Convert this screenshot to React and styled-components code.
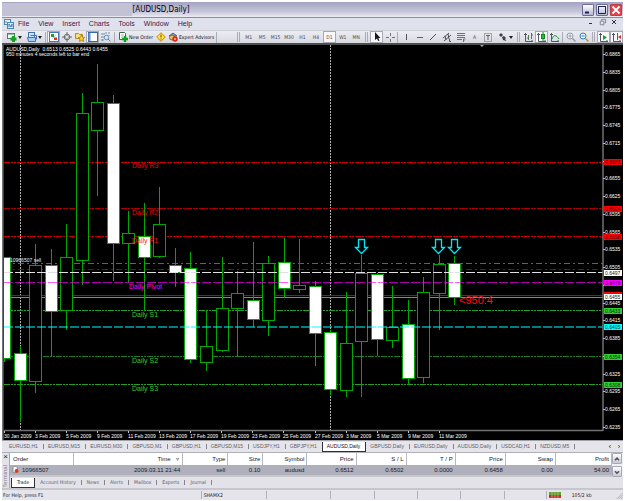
import React from 'react'
import styled, { createGlobalStyle, css } from 'styled-components'

const GlobalStyle = createGlobalStyle`
  body {
    margin: 0;
    background: #ffffff;
    font-family: 'Liberation Sans', Arial, sans-serif;
    color: #20202c;
  }
  button {
    font-family: inherit;
    color: inherit;
    cursor: pointer;
  }
`

const uiFont = css`
  font-family: 'DejaVu Sans Condensed', 'Liberation Sans', sans-serif;
`

const Window = styled.div`
  margin: 2px;
  background: #e2e2ea;
`

const TitleBar = styled.header`
  display: flex;
  align-items: center;
  height: 15px;
  background: linear-gradient(#a3a3c3, #b4b4cd 30%, #c6c6d9 65%, #ececf4);
  border-bottom: 1px solid #8c8c9c;
`

const TitleBlank = styled.div`
  width: 21%;
  height: 13px;
  background: #c2c2d4;
`

const Title = styled.h1`
  flex: 1;
  margin: 0;
  ${uiFont}
  font-size: 8px;
  font-weight: normal;
  line-height: 14px;
  color: #000008;
`

const WindowButtons = styled.div`
  display: flex;
  gap: 2px;
  padding-right: 1px;
`

const WindowButton = styled.button`
  display: block;
  width: 12px;
  height: 12px;
  padding: 0;
  border: 1px solid ${({ $close }) => ($close ? '#b84048' : '#6c6c98')};
  border-radius: 1px;
  background: ${({ $close }) => ($close ? '#e0434a' : 'linear-gradient(#ffffff, #b6b6d2)')};
  svg {
    display: block;
  }
`

const MenuBar = styled.nav`
  display: flex;
  align-items: center;
  gap: 4px;
  height: 12px;
  padding: 0 4px 0 2px;
  background: #dfe1ec;
  border-bottom: 1px solid #d0d0da;
`

const Menus = styled.div`
  display: flex;
  gap: 9px;
`

const MenuItem = styled.button`
  padding: 0;
  border: 0;
  background: none;
  font-size: 7px;
  line-height: 12px;
  color: #402048;
`

const ChildButtons = styled.div`
  display: flex;
  gap: 2px;
  margin-left: auto;
`

const ToolBar = styled.div`
  display: flex;
  align-items: center;
  height: 12px;
  padding-left: 2px;
  background: linear-gradient(#ececf2, #d9d9e2);
  border-bottom: 2px solid #4c504c;
`

const ToolGroup = styled.div`
  display: flex;
  align-items: center;
  ${({ $width }) => $width && `width: ${$width}px;`}
`

const ToolButton = styled.button`
  display: flex;
  flex: ${({ $grow }) => ($grow ? '1 1 0' : 'none')};
  align-items: center;
  justify-content: center;
  gap: 1px;
  box-sizing: border-box;
  min-width: ${({ $wide }) => ($wide ? 20 : 13)}px;
  height: 12px;
  padding: 0;
  border: 1px solid ${({ $pressed }) => ($pressed ? '#a8a8b4' : 'transparent')};
  background: ${({ $pressed }) => ($pressed ? '#f8f8fc' : 'none')};
  ${uiFont}
  font-size: 5px;
  line-height: 10px;
  color: ${({ $grow }) => ($grow ? '#484850' : '#101018')};
  white-space: nowrap;
  svg {
    display: block;
    flex: none;
  }
`

const Separator = styled.span`
  width: 1px;
  height: 11px;
  margin: 0 ${({ $gap }) => $gap || 1}px;
  background: #acacb6;
`

const Grip = styled.span`
  width: 1px;
  height: 10px;
  margin: 0 2px;
  border: solid #acacb6;
  border-width: 0 1px;
`

const Spacer = styled.span`
  flex: 1;
`

const ChartArea = styled.main`
  background: #000000;
  svg {
    display: block;
    width: 100%;
    height: auto;
  }
  text {
    font-size: 5px;
  }
  .level {
    font-size: 7px;
  }
  .countdown {
    font-size: 11px;
  }
`

const ChartTabs = styled.div`
  display: flex;
  align-items: center;
  height: 11px;
  padding-left: 3px;
  background: #e4e4ea;
  border-top: 1px solid #a0a0a8;
`

const ChartTab = styled.button`
  height: 10px;
  box-sizing: border-box;
  padding: 0 5px 0 4px;
  border: ${({ $active }) => ($active ? '1px solid #303038' : '0')};
  border-top: 0;
  background: ${({ $active }) => ($active ? '#ffffff' : 'none')};
  font-size: 5px;
  line-height: 9px;
  color: ${({ $active }) => ($active ? '#101018' : '#606068')};
  white-space: nowrap;
`

const TerminalTab = styled(ChartTab)`
  ${uiFont}
  padding: 0 5px;
`

const Divider = styled.span`
  width: 1px;
  height: 5px;
  background: #84848c;
`

const TabArrows = styled.div`
  display: flex;
  gap: 1px;
  margin-left: auto;
  button {
    width: 8px;
    padding: 0;
    border: 0;
    background: none;
    font-size: 7px;
    line-height: 8px;
  }
`

const Terminal = styled.section`
  display: flex;
  border-top: 1px solid #b0b0b8;
  background: #e2e2e8;
`

const TerminalSide = styled.div`
  display: flex;
  flex-direction: column;
  align-items: center;
  justify-content: space-between;
  width: 7px;
  border-right: 1px solid #a8a8b0;
`

const CloseButton = styled.button`
  padding: 0;
  border: 0;
  background: none;
  font-size: 8px;
  line-height: 7px;
`

const SideLabel = styled.span`
  writing-mode: vertical-rl;
  rotate: 180deg;
  font-size: 6px;
  line-height: 7px;
  color: #80808a;
`

const TerminalBody = styled.div`
  flex: 1;
  min-width: 0;
`

const TableWrap = styled.div`
  display: flex;
`

const Table = styled.table`
  flex: 1;
  width: 100%;
  table-layout: fixed;
  border-collapse: collapse;
  font-size: 6px;
  line-height: 9px;
  border-bottom: 2px solid #c8c8cc;
`

const HeadCell = styled.th`
  height: 12px;
  padding: 0 3px;
  background: #ffffff;
  font-weight: normal;
  text-align: ${({ $left }) => ($left ? 'left' : 'right')};
  box-shadow: inset -1px 0 #b8b8c0;
`

const Cell = styled.td`
  height: 10px;
  padding: 0 3px 0 2px;
  background: #b0b0bc;
  text-align: ${({ $left }) => ($left ? 'left' : 'right')};
  svg {
    vertical-align: middle;
    margin-right: 3px;
  }
`

const ScrollBar = styled.div`
  display: flex;
  flex-direction: column;
  justify-content: space-between;
  width: 11px;
  background: #f0f0f4;
`

const ScrollButton = styled.button`
  width: 10px;
  height: 11px;
  padding: 0;
  border: 1px solid #a8a8b4;
  border-radius: 1px;
  background: linear-gradient(#ffffff, #c8c8d4);
  svg {
    display: block;
  }
`

const TerminalTabs = styled.div`
  display: flex;
  align-items: center;
  height: 11px;
  padding-left: 1px;
`

const StatusBar = styled.footer`
  display: grid;
  grid-template-columns: 198fr 65fr 64fr 44fr 43fr 43fr 43fr 42fr 77fr;
  align-items: center;
  height: 10px;
  border-top: 2px solid #c6c6ce;
  background: #e4e4ea;
  ${uiFont}
  font-size: 5px;
  line-height: 8px;
`

const StatusCell = styled.div`
  display: flex;
  align-items: center;
  gap: 11px;
  box-sizing: border-box;
  min-width: 0;
  height: 8px;
  padding-left: ${({ $first }) => ($first ? 1 : 2)}px;
  border-left: ${({ $first }) => ($first ? '0' : '1px solid #b0b0b8')};
  white-space: nowrap;
  svg:last-child {
    margin-left: auto;
  }
`

/* ---------- icons ---------- */

const Icon = ({ children, size = 10, stroke = '#505060' }) => (
  <svg width={size} height={size} viewBox="0 0 10 10" fill="none" stroke={stroke} strokeWidth="1" aria-hidden="true">
    {children}
  </svg>
)

const Caret = () => (
  <svg width="4" height="3" viewBox="0 0 4 3" aria-hidden="true"><path d="M0 0h4L2 3z" fill="#202028" /></svg>
)

const AppIcon = () => (
  <Icon stroke="#4a86b8">
    <rect x=".5" y=".5" width="6" height="5" fill="#e8f4fc" />
    <rect x="3.5" y="3.5" width="6" height="6" fill="#d4eafa" />
    <path d="M5 8V5l2 3 1-3v3M1 3h2" />
  </Icon>
)

const NewChartIcon = () => (
  <Icon>
    <rect x=".5" y="1.5" width="7" height="5" fill="#fff" stroke="#38885c" />
    <path d="M1 2h6" stroke="#38885c" />
    <path d="M6.500 4v6M3.500 7h6" stroke="#18a020" strokeWidth="3" />
  </Icon>
)

const ProfilesIcon = () => (
  <Icon stroke="#3e74b0">
    <rect x="1.500" y=".5" width="6" height="5" fill="#d0e4f8" />
    <path d="M.5 5.500h8v4h-7z" fill="#a8ccf0" />
    <path d="M3.500 3.500h6v4" />
  </Icon>
)

const MarketIcon = () => (
  <Icon stroke="#4878b0">
    <rect x=".5" y=".5" width="9" height="9" fill="#fff" />
    <path d="M2 2h3v3H2z" fill="#20a030" stroke="none" />
    <path d="M5 5.500h3v2.500H5z" fill="#e03020" stroke="none" />
    <path d="M3 7l4-4" stroke="#b8cce4" />
  </Icon>
)

const TargetIcon = () => (
  <Icon stroke="#686870">
    <circle cx="5" cy="5" r="2.800" />
    <path d="M5 0v4M5 6v4M0 5h4M6 5h4" />
  </Icon>
)

const NavigatorIcon = () => (
  <Icon stroke="#b08820">
    <path d="M.5 1.500h3l1 1h3v4h-7z" fill="#f8e080" />
    <path d="M6.500 3l1 2.200 2.200.3-1.700 1.500.5 2.500-2-1.200-2 1.200.4-2.500-1.600-1.500 2.200-.3z" fill="#ffd030" />
  </Icon>
)

const TerminalIcon = () => (
  <Icon stroke="#3868a8">
    <rect x=".5" y=".5" width="9" height="9" fill="#fff" />
    <path d="M1.500 1v8" strokeWidth="2" stroke="#6090d0" />
  </Icon>
)

const TesterIcon = () => (
  <Icon stroke="#6890b0">
    <path d="M1 1v8M3 1v5M5 0v4M8 0v4M1 8h3" strokeDasharray="2 1" />
    <circle cx="5.500" cy="5.500" r="2.200" fill="#d8ecf8" />
    <path d="M7 7l2.500 2.500" stroke="#a08030" />
  </Icon>
)

const NewOrderIcon = () => (
  <Icon stroke="#406850">
    <path d="M1.500.5h5l1 1v6h-6z" fill="#fff" />
    <path d="M3 3h3M3 5h2" stroke="#a0b0a8" />
    <path d="M7 4v6M4 7h6" stroke="#10a020" strokeWidth="2.400" />
  </Icon>
)

const MetaEditorIcon = () => (
  <Icon stroke="#c09010">
    <path d="M5 .7L9.300 5 5 9.300.7 5z" fill="#ffe040" />
    <path d="M5 2.500v3M5 6.500v1" stroke="#705000" />
  </Icon>
)

const ExpertIcon = () => (
  <Icon stroke="#906820">
    <path d="M1 4l4-3 4 3z" fill="#80a0c8" stroke="#406898" />
    <circle cx="4" cy="5.500" r="2.500" fill="#f0c060" />
    <circle cx="7" cy="7" r="2.700" fill="#e02818" stroke="none" />
    <path d="M6 7h2" stroke="#fff" />
  </Icon>
)

const CursorIcon = () => (
  <Icon><path d="M3 0v8l2-1.600L6.200 9l1.300-.6L6.300 6H8.500z" fill="#181820" stroke="none" /></Icon>
)
const CrossIcon = () => <Icon stroke="#707078"><path d="M5.500 1v3M5.500 7v3M1 5.500h3M7 5.500h3" /></Icon>
const VLineIcon = () => <Icon stroke="#505058"><path d="M5.500 2v6" /></Icon>
const HLineIcon = () => <Icon stroke="#606068"><path d="M2 5.500h6" /></Icon>
const TrendIcon = () => <Icon stroke="#505058"><path d="M2 8l6-6" /></Icon>
const ChannelIcon = () => (
  <Icon stroke="#505058"><path d="M1 6l6-5M2 9l7-6M3 4l1 4M6 2l1 5M7.500 7v2.500H9" /></Icon>
)
const FiboIcon = () => (
  <Icon stroke="#707078"><path d="M1 1.500h8M1 3.500h8M1 5.500h8M1 7.500h5M7.500 10V7h2M7.500 8.500h1" /></Icon>
)
const LabelIcon = () => (
  <Icon stroke="#606068"><rect x="1.500" y="1.500" width="7" height="8" strokeDasharray="1 1" /><path d="M3 3.500h4M5 3.500V8" /></Icon>
)
const ArrowsIcon = () => (
  <Icon stroke="none"><path d="M1 3l2-2 2 2-2 2zM4 5l2-1 2 2-1 1 1.500 2L5 8z" fill="#404048" /></Icon>
)

const axes = <path d="M1.500 1v8.500H9M0 2.500h3M8 8v2" stroke="#505860" />
const BarsIcon = () => <Icon>{axes}<path d="M4.500 3v5M7.500 1v6M3 6h2M7 3h2" stroke="#507858" /></Icon>
const CandlesIcon = () => (
  <Icon>{axes}<path d="M6 0v9" stroke="#108820" /><rect x="4.500" y="2.500" width="3" height="4" fill="#28c038" stroke="#108820" /></Icon>
)
const LineIcon = () => <Icon>{axes}<path d="M2 7c2-5 4-4 7 0" stroke="#189028" /></Icon>
const ShiftIcon = () => <Icon>{axes}<path d="M4 3l4 2.500L4 8z" fill="#18a028" stroke="none" /></Icon>
const ScrollIcon = () => (
  <Icon>{axes}<path d="M5.500 1v7" stroke="#4060a0" /><path d="M9 3v4L6 5z" fill="#d83020" stroke="none" /></Icon>
)
const ZoomIcon = ({ color, plus }) => (
  <Icon stroke={color}>
    <circle cx="4" cy="4" r="3" fill="#e8f4fc" />
    <path d={plus ? 'M2.500 4h3M4 2.500v3' : 'M2.500 4h3'} />
    <path d="M6.500 6.500l3 3" stroke={plus ? '#9898a0' : '#c09030'} strokeWidth="1.500" />
  </Icon>
)

const MinGlyph = () => <Icon stroke="#202050"><path d="M2 7.500h4" strokeWidth="2" /></Icon>
const MaxGlyph = () => <Icon stroke="#202050"><path d="M1 1.500h8M1.500 1v7.500h7V1" /></Icon>
const CloseGlyph = () => <Icon stroke="#fff"><path d="M1.500 1.500l7 7M8.500 1.500l-7 7" strokeWidth="1.800" /></Icon>
const SmallMin = () => <Icon stroke="#303038"><path d="M3 6.500h3" /></Icon>
const SmallRestore = () => <Icon size={9} stroke="#808088"><path d="M4 3V1.500h4.500v4H7M2.500 3.500h4v4h-4z" /></Icon>
const SmallClose = () => <Icon stroke="#303038"><path d="M3 3l4 4M7 3L3 7" /></Icon>

/* ---------- chart data ---------- */

// [x, wick top, body top, body bottom, wick bottom, filled]
const candles = [
  [4, 257, 257, 358, 362, 1],
  [20, 346, 353, 380, 422, 1],
  [35, 244, 265, 381, 393, 0],
  [51, 249, 265, 311, 357, 1],
  [66, 224, 257, 310, 330, 0],
  [82, 93, 113, 260, 285, 0],
  [97, 64, 102, 130, 196, 0],
  [113, 95, 103, 243, 281, 1],
  [128, 211, 233, 243, 282, 0],
  [144, 203, 236, 257, 311, 1],
  [159, 187, 224, 256, 258, 0],
  [175, 248, 265, 272, 287, 1],
  [190, 252, 268, 359, 363, 1],
  [206, 310, 346, 362, 371, 0],
  [222, 257, 308, 350, 352, 0],
  [237, 271, 293, 308, 357, 0],
  [253, 242, 300, 319, 327, 1],
  [268, 256, 263, 320, 336, 0],
  [284, 238, 262, 288, 298, 1],
  [299, 239, 285, 289, 293, 0],
  [315, 281, 286, 333, 366, 1],
  [330, 330, 332, 389, 395, 1],
  [346, 292, 343, 390, 397, 0],
  [361, 255, 273, 341, 397, 0],
  [377, 273, 274, 339, 356, 1],
  [392, 286, 327, 340, 348, 0],
  [408, 300, 324, 378, 385, 1],
  [423, 277, 292, 377, 383, 0],
  [439, 255, 264, 293, 330, 0],
  [454, 256, 263, 297, 305, 1],
]

const levels = [
  { y: 162, color: '#d00000', dash: '6 1 2 1 2 1' },
  { y: 208, color: '#b00000', dash: '6 1 2 1 2 1' },
  { y: 236, color: '#d00000', dash: '6 1 2 1 2 1' },
  { y: 263, color: '#209020', dash: '6 3 2 3' },
  { y: 269, color: '#a00000', dash: '6 3 2 3' },
  { y: 310, color: '#24a024', dash: '6 1 2 1 2 1' },
  { y: 356, color: '#1c801c', dash: '6 1 2 1 2 1' },
  { y: 384, color: '#24a024', dash: '6 1 2 1 2 1' },
  { y: 295, color: '#c00000' },
  { y: 297, color: '#808890' },
]

const captions = [
  ['Daily R3', 132, 168, '#f00000'],
  ['Daily R2', 132, 215, '#f00000'],
  ['Daily R1', 132, 243, '#ff2020'],
  ['Daily Pivot', 129, 289, '#ff00ff'],
  ['Daily S1', 132, 317, '#32cd32'],
  ['Daily S2', 132, 363, '#32cd32'],
  ['Daily S3', 132, 391, '#32cd32'],
]

const tags = [
  ['0.6683', 162, '#ff0000', '#500000'],
  ['0.6604', 209, '#ff0000', '#500000'],
  ['0.6558', 237, '#ff0000', '#500000'],
  ['0.6497', 273, '#ffffff', '#202020'],
  ['0.6479', 283, '#ff00ff', '#400040'],
  ['', 295, '#ff0000', '#500000'],
  ['0.6455', 297, '#ffffff', '#202020'],
  ['0.6433', 311, '#32cd32', '#003000'],
  ['0.6405', 327, '#00ffff', '#003038'],
  ['0.6354', 357, '#32cd32', '#003000'],
  ['0.6308', 385, '#32cd32', '#003000'],
]

// a scale price gives way to a tag that covers it
const prices = Array.from({ length: 22 }, (_, i) => ({
  price: ((6865 - i * 30) / 10000).toFixed(4),
  y: 54 + Math.round(i * 17.76),
})).map(p => ({ ...p, covered: tags.some(([, y]) => Math.abs(y - p.y) < 4) }))

const dates = [
  '30 Jan 2009', '3 Feb 2009', '5 Feb 2009', '9 Feb 2009', '11 Feb 2009',
  '13 Feb 2009', '17 Feb 2009', '19 Feb 2009', '23 Feb 2009', '25 Feb 2009',
  '27 Feb 2009', '3 Mar 2009', '5 Mar 2009', '9 Mar 2009', '11 Mar 2009',
]

const Candle = ({ x, high, top, bottom, low, filled }) => (
  <g stroke="#00a800">
    <path d={`M${x + 0.5} ${high}V${top}M${x + 0.5} ${bottom + 1}V${low}`} />
    <rect x={x - 5.5} y={top + 0.5} width="12" height={bottom - top} fill={filled ? '#fff' : '#000'} />
  </g>
)

const DownArrow = ({ x }) => (
  <path
    d={`M${x - 2.5} 239.500h6v8h3l-6 6-6-6h3z`}
    fill="#000"
    stroke="#00e8f8"
    strokeWidth="1.300"
  />
)

const Chart = () => (
  <svg viewBox="2 45 621 395" role="img" aria-label="AUDUSD daily candlestick chart">
    <defs>
      <clipPath id="plot"><rect x="4" y="45" width="599" height="386" /></clipPath>
    </defs>
    <path d="M2.500 45V440" stroke="#707478" />
    <path d="M3.500 45V440" stroke="#404448" />
    <g clipPath="url(#plot)">
      <path d="M20.500 45V431M330.500 45V431" stroke="#b0b0b0" strokeDasharray="2 1" />
      {levels.map(({ y, color, dash }) => (
        <path key={y} d={`M4 ${y + 0.5}H603`} stroke={color} strokeDasharray={dash} />
      ))}
      {candles.map(([x, high, top, bottom, low, filled]) => (
        <Candle key={x} x={x} high={high} top={top} bottom={bottom} low={low} filled={filled} />
      ))}
      <path d="M4 272.500H603" stroke="#e0e0e0" strokeDasharray="9 2" />
      <path d="M4 282.500H603" stroke="#ff00ff" strokeOpacity=".65" strokeDasharray="9 2" />
      <path d="M4 327H603" stroke="#00ffff" strokeOpacity=".5" strokeWidth="2" strokeDasharray="9 2" />
    </g>
    {captions.map(([label, x, y, color]) => (
      <text key={label} className="level" x={x} y={y} fill={color}>{label}</text>
    ))}
    {[361, 438, 454].map(x => <DownArrow key={x} x={x} />)}
    <text className="countdown" x="459" y="304" fill="#ff1010">&lt;950:4</text>
    <text x="6" y="51" fill="#fff">AUDUSD,Daily&nbsp; 0.6513 0.6525 0.6443 0.6455</text>
    <text x="6" y="56" fill="#fff">950 minutes 4 seconds left to bar end</text>
    <text x="10" y="262" fill="#f0f0f0">10966507 sell</text>
    <path d="M480 45h4l-2 2z" fill="#90a8b8" />

    <path d="M603 45V431M4 430.500H603" stroke="#707070" strokeWidth="1.500" fill="none" />
    {prices.map(({ price, y, covered }) => (
      <g key={price}>
        <path d={`M603 ${y + 0.5}h2`} stroke="#c0c0c0" />
        {!covered && <text x="605" y={y + 2} fill="#fff">{price}</text>}
      </g>
    ))}
    {tags.map(([price, y, bg, fg]) => (
      <g key={y}>
        <rect x="604" y={y - 3} width="18" height="6" fill={bg} />
        {price && <text x="605" y={y + 2} fill={fg}>{price}</text>}
      </g>
    ))}
    {dates.map((date, i) => (
      <g key={date}>
        <path d={`M${Math.round(4 + i * 31.05)}.500 431v2`} stroke="#c0c0c0" />
        <text x={Math.round(4 + i * 31.05)} y="438" fill="#fff">{date}</text>
      </g>
    ))}
  </svg>
)

/* ---------- page ---------- */

const menus = ['File', 'View', 'Insert', 'Charts', 'Tools', 'Window', 'Help']
const periods = ['M1', 'M5', 'M15', 'M30', 'H1', 'H4', 'D1', 'W1', 'MN']
const chartTabs = [
  'EURUSD,H1', 'EURUSD,M15', 'EURUSD,M30', 'GBPUSD,M1', 'GBPUSD,H1', 'GBPUSD,M15', 'USDJPY,H1', 'GBPJPY,H1',
  'AUDUSD,Daily', 'GBPUSD,Daily', 'EURUSD,Daily', 'AUDUSD,Daily', 'USDCAD,H1', 'NZDUSD,M5',
]
const activeChart = 8
const columns = [
  ['Order', 64, '10966507'],
  ['Time', 109, '2009.03.11 21:44'],
  ['Type', 45, 'sell'],
  ['Size', 35, '0.10'],
  ['Symbol', 44, 'audusd'],
  ['Price', 49, '0.6512'],
  ['S / L', 50, '0.6502'],
  ['T / P', 49, '0.0000'],
  ['Price', 50, '0.6458'],
  ['Swap', 50, '0.00'],
  ['Profit', 56, '54.00'],
]
const terminalTabs = ['Trade', 'Account History', 'News', 'Alerts', 'Mailbox', 'Experts', 'Journal']

const Tools = () => (
  <ToolBar role="toolbar" aria-label="Tools">
    <ToolButton $wide aria-label="New chart"><NewChartIcon /><Caret /></ToolButton>
    <ToolButton $wide aria-label="Profiles"><ProfilesIcon /><Caret /></ToolButton>
    <Separator />
    <ToolButton $pressed aria-label="Market watch"><MarketIcon /></ToolButton>
    <ToolButton aria-label="Data window"><TargetIcon /></ToolButton>
    <ToolButton aria-label="Navigator"><NavigatorIcon /></ToolButton>
    <ToolButton $pressed aria-label="Terminal"><TerminalIcon /></ToolButton>
    <ToolButton aria-label="Strategy tester"><TesterIcon /></ToolButton>
    <Separator $gap={2} />
    <ToolButton><NewOrderIcon />New Order</ToolButton>
    <ToolButton aria-label="MetaEditor"><MetaEditorIcon /></ToolButton>
    <ToolButton><ExpertIcon />Expert Advisors</ToolButton>
    <Separator />
    <Spacer />
    <Grip />
    <ToolGroup $width={121}>
      {periods.map(p => <ToolButton key={p} $grow $pressed={p === 'D1'}>{p}</ToolButton>)}
    </ToolGroup>
    <Grip />
    <ToolButton $pressed aria-label="Cursor"><CursorIcon /></ToolButton>
    <ToolButton aria-label="Crosshair"><CrossIcon /></ToolButton>
    <Separator />
    <ToolGroup $width={96}>
      <ToolButton $grow aria-label="Vertical line"><VLineIcon /></ToolButton>
      <ToolButton $grow aria-label="Horizontal line"><HLineIcon /></ToolButton>
      <ToolButton $grow aria-label="Trendline"><TrendIcon /></ToolButton>
      <ToolButton $grow aria-label="Channel"><ChannelIcon /></ToolButton>
      <ToolButton $grow aria-label="Fibonacci"><FiboIcon /></ToolButton>
      <ToolButton $grow>A</ToolButton>
      <ToolButton $grow aria-label="Text label"><LabelIcon /></ToolButton>
    </ToolGroup>
    <ToolButton $wide aria-label="Arrows"><ArrowsIcon /><Caret /></ToolButton>
    <Grip />
    <ToolButton aria-label="Bar chart"><BarsIcon /></ToolButton>
    <ToolButton $pressed aria-label="Candlesticks"><CandlesIcon /></ToolButton>
    <ToolButton aria-label="Line chart"><LineIcon /></ToolButton>
    <Separator />
    <ToolButton aria-label="Zoom in"><ZoomIcon color="#9898a0" plus /></ToolButton>
    <ToolButton aria-label="Zoom out"><ZoomIcon color="#3880c0" /></ToolButton>
    <Grip />
    <ToolButton $pressed aria-label="Auto scroll"><ShiftIcon /></ToolButton>
    <ToolButton $pressed aria-label="Chart shift"><ScrollIcon /></ToolButton>
  </ToolBar>
)

const TerminalPanel = () => (
  <Terminal>
    <TerminalSide>
      <CloseButton aria-label="Close terminal">×</CloseButton>
      <SideLabel>Terminal</SideLabel>
    </TerminalSide>
    <TerminalBody>
      <TableWrap>
        <Table>
          <colgroup>
            {columns.map(([name, width], i) => <col key={name + i} width={width} />)}
          </colgroup>
          <thead>
            <tr>
              {columns.map(([name], i) => (
                <HeadCell key={name + i} $left={i === 0}>{name}{name === 'Time' && <>&nbsp;&nbsp; ▿&nbsp;</>}</HeadCell>
              ))}
            </tr>
          </thead>
          <tbody>
            <tr>
              {columns.map(([name, , value], i) => (
                <Cell key={name + i} $left={i === 0}>
                  {i === 0 && (
                    <Icon size={7} stroke="#707078">
                      <path d="M1.500.5h4l2 2v7h-6z" fill="#fff" />
                      <circle cx="6.500" cy="7" r="2.800" fill="#e03818" stroke="none" />
                    </Icon>
                  )}
                  {value}
                </Cell>
              ))}
            </tr>
          </tbody>
        </Table>
        <ScrollBar>
          <ScrollButton aria-label="Scroll up"><Icon size={8}><path d="M2.500 6.500L5 4l2.500 2.500" strokeWidth="2" /></Icon></ScrollButton>
          <ScrollButton aria-label="Scroll down"><Icon size={8}><path d="M2.500 4L5 6.500 7.500 4" strokeWidth="2" /></Icon></ScrollButton>
        </ScrollBar>
      </TableWrap>
      <TerminalTabs>
        {terminalTabs.map((name, i) => (
          <React.Fragment key={name}>
            <TerminalTab $active={i === 0}>{name}</TerminalTab>
            {i > 0 && <Divider />}
          </React.Fragment>
        ))}
      </TerminalTabs>
    </TerminalBody>
  </Terminal>
)

const App = () => (
  <>
    <GlobalStyle />
    <Window>
      <TitleBar>
        <TitleBlank />
        <Title>[AUDUSD,Daily]</Title>
        <WindowButtons>
          <WindowButton aria-label="Minimize"><MinGlyph /></WindowButton>
          <WindowButton aria-label="Maximize"><MaxGlyph /></WindowButton>
          <WindowButton $close aria-label="Close"><CloseGlyph /></WindowButton>
        </WindowButtons>
      </TitleBar>
      <MenuBar>
        <AppIcon />
        <Menus>
          {menus.map(m => <MenuItem key={m}>{m}</MenuItem>)}
        </Menus>
        <ChildButtons>
          <MenuItem aria-label="Minimize chart"><SmallMin /></MenuItem>
          <MenuItem aria-label="Restore chart"><SmallRestore /></MenuItem>
          <MenuItem aria-label="Close chart"><SmallClose /></MenuItem>
        </ChildButtons>
      </MenuBar>
      <Tools />
      <ChartArea><Chart /></ChartArea>
      <ChartTabs>
        {chartTabs.map((name, i) => (
          <React.Fragment key={i}>
            <ChartTab $active={i === activeChart}>{name}</ChartTab>
            {i !== activeChart && i !== activeChart - 1 && <Divider />}
          </React.Fragment>
        ))}
        <TabArrows>
          <button aria-label="Previous tabs">‹</button>
          <button aria-label="Next tabs">›</button>
        </TabArrows>
      </ChartTabs>
      <TerminalPanel />
      <StatusBar>
        <StatusCell $first>For Help, press F1</StatusCell>
        <StatusCell>SHAMX2</StatusCell>
        <StatusCell />
        <StatusCell />
        <StatusCell />
        <StatusCell />
        <StatusCell />
        <StatusCell />
        <StatusCell>
          <svg width="12" height="6" viewBox="0 0 12 6" aria-hidden="true">
            <path d="M0 0h12v3H0z" fill="#60a030" />
            <path d="M0 3h12v3H0z" fill="#c83028" />
            <path d="M3 0v6M6 0v6M9 0v6" stroke="#e8d8c0" strokeWidth=".5" />
          </svg>
          105/2 kb
          <Icon size={7} stroke="#a0a0a8"><path d="M1 10l9-9M4 10l6-6M7 10l3-3" /></Icon>
        </StatusCell>
      </StatusBar>
    </Window>
  </>
)

export default App
